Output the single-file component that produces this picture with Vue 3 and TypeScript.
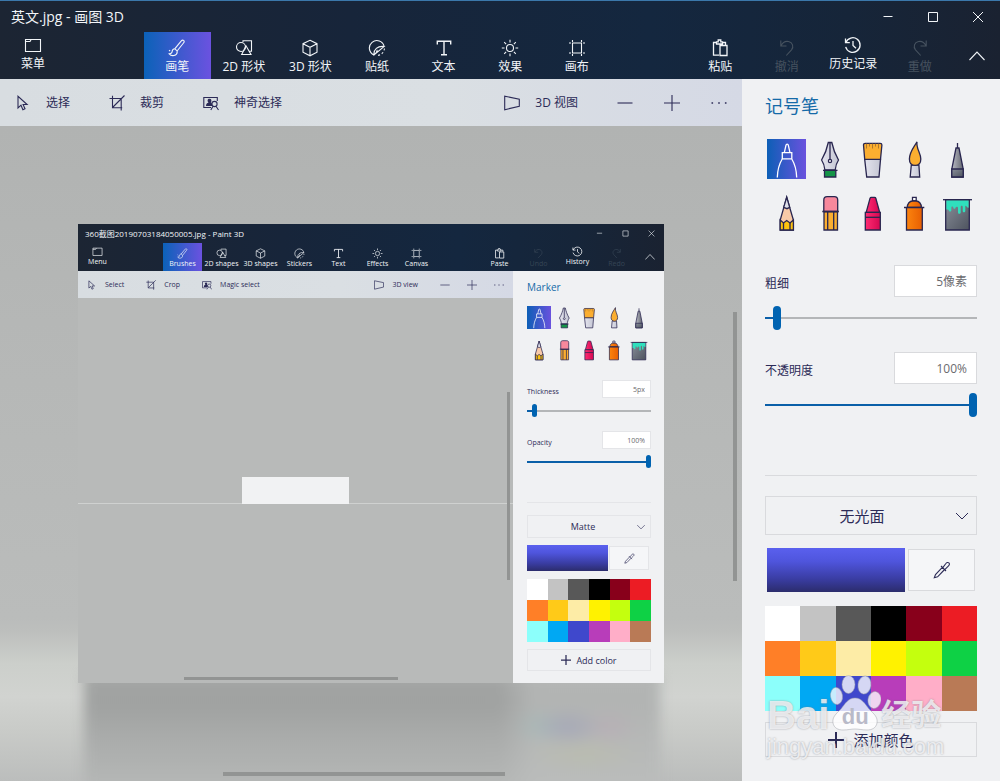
<script setup lang="ts">
import { computed, ref } from 'vue'

defineOptions({ name: 'App' })

const props = defineProps<{ compact?: boolean }>()

interface Command {
  icon: string
  label: string
  raised?: boolean
  disabled?: boolean
}

const zh = {
  title: '英文.jpg - 画图 3D',
  menu: '菜单',
  tabs: ['画笔', '2D 形状', '3D 形状', '贴纸', '文本', '效果', '画布'],
  actions: ['粘贴', '撤消', '历史记录', '重做'],
  tools: ['选择', '裁剪', '神奇选择'],
  view: '3D 视图',
  heading: '记号笔',
  thickness: '粗细',
  thicknessValue: '5像素',
  opacity: '不透明度',
  finish: '无光面',
  add: '添加颜色',
}

const en: typeof zh = {
  title: '360截图20190703184050005.jpg - Paint 3D',
  menu: 'Menu',
  tabs: ['Brushes', '2D shapes', '3D shapes', 'Stickers', 'Text', 'Effects', 'Canvas'],
  actions: ['Paste', 'Undo', 'History', 'Redo'],
  tools: ['Select', 'Crop', 'Magic select'],
  view: '3D view',
  heading: 'Marker',
  thickness: 'Thickness',
  thicknessValue: '5px',
  opacity: 'Opacity',
  finish: 'Matte',
  add: 'Add color',
}

const t = props.compact ? en : zh
const uid = props.compact ? 'nested' : 'main'

const tabIcons = ['brush', 'shapes', 'cube', 'sticker', 'text', 'effects', 'canvas']
const tabs: Command[] = t.tabs.map((label, i) => ({ label, icon: tabIcons[i] }))
const actions: Command[] = [
  { icon: 'paste', label: t.actions[0] },
  { icon: 'undo', label: t.actions[1], disabled: true },
  { icon: 'history', label: t.actions[2], raised: true },
  { icon: 'redo', label: t.actions[3], disabled: true },
]
const toolIcons = ['cursor', 'crop', 'magic']
const tools: Command[] = t.tools.map((label, i) => ({ label, icon: toolIcons[i] }))

const pens = ['marker', 'fountain', 'flat', 'round', 'pixel', 'pencil', 'eraser', 'crayon', 'spray', 'bucket']
const activeTab = ref(0)
const activePen = ref('marker')

const colors = [
  '#ffffff', '#c3c3c3', '#585858', '#000000', '#88001b', '#ec1c24',
  '#ff7f27', '#ffca18', '#fdeca6', '#fff200', '#c4ff0e', '#0ed145',
  '#8cfffb', '#00a8f3', '#3f48cc', '#b83dba', '#ffaec8', '#b97a56',
]

const thickness = ref(5)
const opacity = ref(100)
const thicknessFill = computed(() => `${thickness.value}%`)
const opacityFill = computed(() => `${opacity.value}%`)
</script>

<template>
  <div class="window" :class="compact ? 'compact' : 'full'">
    <svg v-if="!compact" class="sprite" aria-hidden="true">
      <defs>
        <linearGradient id="g-steel" x1="0" x2="1"><stop offset="0" stop-color="#b9bbc4" /><stop offset="1" stop-color="#62656f" /></linearGradient>
        <linearGradient id="g-silver" x1="0" x2="1"><stop offset="0" stop-color="#e4e4ee" /><stop offset="1" stop-color="#c4c6d3" /></linearGradient>
        <linearGradient id="g-pink" x1="0" x2="1"><stop offset="0" stop-color="#ff2c72" /><stop offset="1" stop-color="#d40751" /></linearGradient>
        <linearGradient id="g-orange" x1="0" x2="1"><stop offset="0" stop-color="#ff8a10" /><stop offset="1" stop-color="#e55a00" /></linearGradient>
        <linearGradient id="g-slate" x1="0" x2="1" y2="1"><stop offset="0" stop-color="#8a8f9a" /><stop offset="1" stop-color="#4d535e" /></linearGradient>
      </defs>
      <symbol id="i-menu" viewBox="0 0 18 18"><path d="M1.500 3.500h15v12h-15zM1.500 5.500h4.500l1.200-2" /></symbol>
      <symbol id="i-brush" viewBox="0 0 18 18"><path d="M15.600 1.400c-1-.6-1.800 0-2.500.8L6.800 9.800l2.300 2.200 6.400-8c.7-.9 1-1.900.1-2.600zM6.800 9.800c-2 .2-2.600 1.400-2.700 3-.1 1.300-1.200 2-2.900 2.100 1.200 1.500 3 2 4.900 1.600 2.300-.6 3.400-2.300 3-4.500M1 11.200l1.200.8" /></symbol>
      <symbol id="i-shapes" viewBox="0 0 18 18"><path d="M8 3V1.800h8.500v10.500h-2.200M11 6.800l-4.300 8.700h9.300z" /><circle cx="6" cy="8" r="4.500" /></symbol>
      <symbol id="i-cube" viewBox="0 0 18 18"><path d="M9 1.300l7 3.400v8.500L9 16.800l-7-3.600V4.700zM2 4.700L9 8.300l7-3.600M9 8.300v8.500" /></symbol>
      <symbol id="i-sticker" viewBox="0 0 18 18"><path d="M6 16A7.500 7.500 0 1 1 16.200 7.500M6 16c-.6-5.500 3.500-9.300 10.200-8.500L6 16zM9 10.800c.5 1.500-.3 3-3 5.200" /><path d="M16.400 9.500a7.500 7.500 0 0 1-7.600 7" stroke-dasharray="2 2" /></symbol>
      <symbol id="i-text" viewBox="0 0 18 18"><path d="M2.300 5.500V2.300h13.400v3.200M9 2.300v13.400M6 15.700h6" stroke-width="1.400" /></symbol>
      <symbol id="i-effects" viewBox="0 0 18 18"><circle cx="9" cy="9" r="3.500" /><path d="M9 .8v2.700M9 14.500v2.700M.8 9h2.700M14.500 9h2.700M3.200 3.200l1.900 1.900M12.900 12.900l1.900 1.900M3.200 14.800l1.900-1.900M12.900 5.100l1.900-1.900" /></symbol>
      <symbol id="i-canvas" viewBox="0 0 18 18"><path d="M4.500 1v16M13.500 1v16M1 4h16M1 14h16" stroke-dasharray="2 1 10 1 2" /></symbol>
      <symbol id="i-paste" viewBox="0 0 18 18"><path d="M8 16.200H2.500V3.500H5M12 3.500h2.500V6M5.500 2.800h1.700V1h2.600v1.800h1.700V5h-6zM9 6.500h7v10H9z" stroke-width="1.300" /></symbol>
      <symbol id="i-undo" viewBox="0 0 18 18"><path d="M2.800 1.500V7h5.700M3 6.800c1.500-3 4.300-5 7.500-4.300 4.200 1 5.500 5.200 3 8.300l-5.200 5.700" /></symbol>
      <symbol id="i-redo" viewBox="0 0 18 18"><path d="M15.200 1.500V7H9.500M15 6.800c-1.500-3-4.300-5-7.500-4.300-4.200 1-5.500 5.200-3 8.300l5.200 5.700" /></symbol>
      <symbol id="i-history" viewBox="0 0 18 18"><path d="M1.500 2.500v4.200h4.300M1.900 6.600A7.300 7.300 0 1 1 1.700 10.800M9 5v4.500l3 2.700" stroke-width="1.300" /></symbol>
      <symbol id="i-cursor" viewBox="0 0 16 16"><path d="M3 1.300v11.600l3-2.700 1.900 4.500 2.100-.9-1.900-4.300h4z" /></symbol>
      <symbol id="i-crop" viewBox="0 0 16 16"><path d="M3.500.8v11.900h9.700M.5 3.500h11.700v12M3.500 12.500L15.500.5" /></symbol>
      <symbol id="i-magic" viewBox="0 0 16 16"><path d="M8 12.500H.8v-10h13.500V6" /><path d="M3 11c0-2 .8-3 2.500-3.300C4 6 4.500 3.800 6.500 3.800s2.500 2.200 1.300 3.900c1 .3 1.500.8 1.400 3.300z" fill="currentColor" stroke="none" /><circle cx="11.500" cy="9" r="2.600" /><path d="M10 11.300L7.800 15M13 11.300l2.500 3.700" /></symbol>
      <symbol id="i-view" viewBox="0 0 16 16"><path d="M.7 1.200v13.500l14.600-3.400V4.200z" /></symbol>
      <symbol id="i-minus" viewBox="0 0 16 16"><path d="M.5 8h15" /></symbol>
      <symbol id="i-plus" viewBox="0 0 16 16"><path d="M0 8h16M8 0v16" /></symbol>
      <symbol id="i-dots" viewBox="0 0 16 16"><path d="M.5 8h1.600M7.200 8h1.600M13.900 8h1.600" stroke-width="1.600" /></symbol>
      <symbol id="i-up" viewBox="0 0 16 16"><path d="M.5 12L8 4l7.500 8" /></symbol>
      <symbol id="i-down" viewBox="0 0 16 16"><path d="M2 5l6 6 6-6" stroke-width="1" /></symbol>
      <symbol id="i-min" viewBox="0 0 12 12"><path d="M1.500 5.500h9" stroke-width="1" /></symbol>
      <symbol id="i-max" viewBox="0 0 12 12"><path d="M1.500 1.500h9v9h-9z" stroke-width="1" /></symbol>
      <symbol id="i-close" viewBox="0 0 12 12"><path d="M1 1l10 10M11 1L1 11" stroke-width="1" /></symbol>
      <symbol id="i-dropper" viewBox="0 0 18 18"><path d="M9.300 6.300L2.500 13.500 1.300 16.700l3.300-.9 7-7.300M8 5l5 5M10 6.300l2.700-3.500c1-1.500 2.300-1.700 3.200-.9.900.9.600 2.200-.6 3.200L12 8.300" /></symbol>

      <symbol id="p-marker" viewBox="0 0 39 40"><path d="M17.300 13.700l1.700-7.500c.3-1.400 2-1.400 2.300 0L23 13.700M15.300 13.700h9.500v6.100h-9.500zM15.200 20c-3 5-4.700 11-4.900 18.500M24.800 20c3 5 4.700 11 4.900 18.500" fill="none" stroke="#fff" stroke-width="1.300" /></symbol>
      <symbol id="p-fountain" viewBox="0 0 39 40"><path d="M14.500 31.300h11.300V38H14.500z" fill="#149447" /><path d="M18.300 3.500h3.500c1 5 3 11 6.700 17.500-2 3-3 6.500-3.300 10H14.900c-.3-3.500-1.300-7-3.300-10 3.700-6.500 5.700-12.500 6.700-17.500z" fill="url(#g-silver)" /><path d="M13 31.300h14.500M20 4v16" /><circle cx="20" cy="22" r="1.600" fill="#fff" /></symbol>
      <symbol id="p-flat" viewBox="0 0 39 40"><path d="M11.700 20.300h15.800L26 38H13.700z" fill="url(#g-silver)" /><path d="M10.500 6c0-1 .7-1.700 1.700-1.700h15c1 0 1.700.7 1.700 1.700l-1.400 14.300H11.700z" fill="#fbae30" /><path d="M13.500 4.500v5M16.500 4.500v3M19.500 4.500v5M22.500 4.500v3M25.500 4.500v5" stroke="#9b6a2c" stroke-width=".8" /></symbol>
      <symbol id="p-round" viewBox="0 0 39 40"><path d="M16.300 26h7.600l.8 12h-9.500z" fill="url(#g-silver)" /><path d="M22 2.800c-3 5.500-7.500 10-7.600 17.200 0 4 2.300 6.400 5.700 6.400s5.700-2.400 5.700-6.400C25.700 14 21 9.500 22 2.800z" fill="#fbae30" /></symbol>
      <symbol id="p-pixel" viewBox="0 0 39 40"><path d="M19.500 4v5M18 9h3l4.200 21v8H13.800v-8z" fill="url(#g-steel)" /><path d="M13.800 30h11.400v8H13.800z" fill="url(#g-slate)" /></symbol>
      <symbol id="p-pencil" viewBox="0 0 39 40"><path d="M19.700 5.300l6.700 22.700v10H13.200V28z" fill="#f9caa8" /><path d="M19.700 5.300l3 10-2.700 1.400-3.300-1.400z" fill="#dfe0ea" /><path d="M13.200 28l3.300 3 3.200-2.500 3.300 2.500 3.400-3v10H13.200z" fill="#fdc20f" /><path d="M16.500 31v7M23 31v7" /></symbol>
      <symbol id="p-eraser" viewBox="0 0 39 40"><path d="M14 19.500h13.500V38H14z" fill="#fbae30" /><path d="M13.800 19.500V8c0-2 1.300-3.300 3.300-3.300h7.300c2 0 3.300 1.300 3.300 3.300v11.500z" fill="#f7889c" /><path d="M12.300 19.500h16.500M17.700 19.500V38M23.700 19.500V38" /></symbol>
      <symbol id="p-crayon" viewBox="0 0 39 40"><path d="M13.200 20.300L17 6.300c.2-.7.500-1 1.200-1h3.400c.7 0 1 .3 1.200 1l3.900 14z" fill="url(#g-pink)" /><path d="M12.300 20.300h15V38h-15z" fill="url(#g-pink)" /><path d="M12.300 25.300h15" /></symbol>
      <symbol id="p-spray" viewBox="0 0 39 40"><path d="M17.500 5.300h3.700V9h-3.700z" fill="#fff" /><path d="M12.300 15.500c0-4 2.500-6.500 5.200-6.500h3.700c2.700 0 5.200 2.500 5.200 6.500z" fill="url(#g-orange)" /><path d="M11.500 15.500h15.800V38H11.500zM9 15.500h20.300" fill="url(#g-orange)" /></symbol>
      <symbol id="p-bucket" viewBox="0 0 39 40"><path d="M7.700 7.700h23.600V38H7.700z" fill="url(#g-slate)" /><path d="M8.400 8.300h22.200v7.500c-2 0-1.800-2-3.300-2v5c0 2-2.600 2-2.600 0v-4c0-1.500-2-1.500-2 0v5.500c0 2-2.700 2-2.700 0V16c0-1.500-2-1.500-2.400-.5-.3 2-2.300 1.500-2.300 0 0-1.500-2-1.500-2 0v2.800c0 2-2.300 1.500-2.600 0-.3-1.300-1-.8-2.300-.8z" fill="#2fe0bd" stroke="none" /><path d="M5 7.700h29" /></symbol>
    </svg>

    <header class="header">
      <div class="titlebar">
        <span class="title">{{ t.title }}</span>
        <div class="winbtns">
          <button v-for="b in ['min', 'max', 'close']" :key="b" class="winbtn" type="button" :aria-label="b">
            <svg><use :href="`#i-${b}`" /></svg>
          </button>
        </div>
      </div>
      <nav class="ribbon">
        <button class="cmd raised menu" type="button">
          <svg><use href="#i-menu" /></svg><span>{{ t.menu }}</span>
        </button>
        <div class="tabs">
          <button
            v-for="(c, i) in tabs" :key="c.icon" type="button"
            class="cmd" :class="{ active: i === activeTab }" @click="activeTab = i"
          >
            <svg><use :href="`#i-${c.icon}`" /></svg><span>{{ c.label }}</span>
          </button>
        </div>
        <div class="actions">
          <button
            v-for="c in actions" :key="c.icon" type="button"
            class="cmd" :class="{ raised: c.raised }" :disabled="c.disabled"
          >
            <svg><use :href="`#i-${c.icon}`" /></svg><span>{{ c.label }}</span>
          </button>
        </div>
        <button class="collapse" type="button" aria-label="collapse"><svg><use href="#i-up" /></svg></button>
      </nav>
    </header>

    <div class="body">
      <main class="work">
        <div class="toolbar">
          <button v-for="c in tools" :key="c.icon" class="tool" type="button">
            <svg><use :href="`#i-${c.icon}`" /></svg><span>{{ c.label }}</span>
          </button>
          <button class="tool view" type="button"><svg><use href="#i-view" /></svg><span>{{ t.view }}</span></button>
          <div class="zoom">
            <button v-for="b in ['minus', 'plus', 'dots']" :key="b" class="tool" type="button" :aria-label="b">
              <svg><use :href="`#i-${b}`" /></svg>
            </button>
          </div>
        </div>
        <div class="stage">
          <div v-if="!compact" class="frame"><App compact /></div>
          <template v-else>
            <div class="seam"></div>
            <div class="patch"></div>
          </template>
          <div class="scroll-y"></div>
          <div class="scroll-x"></div>
        </div>
      </main>

      <aside class="side">
        <h2>{{ t.heading }}</h2>
        <div class="pens">
          <button
            v-for="p in pens" :key="p" type="button" class="pen"
            :class="{ chosen: p === activePen }" :aria-label="p" @click="activePen = p"
          >
            <svg><use :href="`#p-${p}`" /></svg>
          </button>
        </div>

        <div class="field">
          <label :for="`${uid}-thick`">{{ t.thickness }}</label>
          <input :id="`${uid}-thick`" class="value" type="text" :value="t.thicknessValue">
        </div>
        <input v-model.number="thickness" class="range" type="range" min="1" max="100" :aria-label="t.thickness" :style="{ '--fill': thicknessFill }">
        <div class="field second">
          <label :for="`${uid}-opacity`">{{ t.opacity }}</label>
          <input :id="`${uid}-opacity`" class="value" type="text" value="100%">
        </div>
        <input v-model.number="opacity" class="range" type="range" min="0" max="100" :aria-label="t.opacity" :style="{ '--fill': opacityFill }">

        <hr>

        <div class="finish">
          <select :aria-label="t.finish"><option>{{ t.finish }}</option></select>
          <svg><use href="#i-down" /></svg>
        </div>
        <div class="current">
          <div class="preview"></div>
          <button class="dropper" type="button" aria-label="dropper"><svg><use href="#i-dropper" /></svg></button>
        </div>
        <div class="palette">
          <button v-for="c in colors" :key="c" type="button" :aria-label="c" :style="{ background: c }"></button>
        </div>
        <button class="add" type="button"><svg><use href="#i-plus" /></svg><span>{{ t.add }}</span></button>

        <div v-if="!compact" class="mark">
          <div class="brand">
            <span class="bai">Bai</span>
            <span class="paw">
              <svg viewBox="0 0 52 56">
                <ellipse cx="7.500" cy="21" rx="6" ry="8.500" transform="rotate(-8 7.500 21)" />
                <ellipse cx="19.500" cy="9.500" rx="6.500" ry="9" />
                <ellipse cx="35.500" cy="10" rx="6.500" ry="9" transform="rotate(8 35.500 10)" />
                <ellipse cx="45.500" cy="25" rx="6.500" ry="8.500" transform="rotate(10 45.500 25)" />
                <path d="M26 23c7 0 10 6 14 11 5 5 9 8 8 14-1 5-5 7-10 7-5 0-8-1-12-1s-7 1-12 1c-5 0-9-2-10-7-1-6 3-9 8-14 4-5 7-11 14-11z" />
              </svg>
              <span class="du">du</span>
            </span>
            <span class="jing">经验</span>
          </div>
          <div class="host">jingyan.baidu.com</div>
        </div>
      </aside>
    </div>
  </div>
</template>

<style>
body {
  margin: 0;
}
</style>

<style scoped>
.window {
  --title-h: 31px;
  --title-x: 11px;
  --title-f: 14px;
  --f: 12px;
  --lh: 16px;
  --ribbon-h: 47px;
  --cmd-w: 66px;
  --tabs-gap: 78px;
  --tabs-w: 466px;
  --actions-w: 266px;
  --collapse-w: 47px;
  --winbtn-w: 45px;
  --win-icon: 12px;
  --cmd-icon: 18px;
  --cmd-pad: 7px;
  --cmd-gap: 2px;
  --raised-pad: 4px;
  --bar-h: 47px;
  --bar-pad: 15px;
  --tool-icon: 16px;
  --tool-gap: 15px;
  --tool-space: 39px;
  --zoom-gap: 31px;
  --side-w: 258px;
  --side-l: 23px;
  --side-r: 23px;
  --head-top: 15px;
  --head-f: 18px;
  --head-lh: 24px;
  --pens-top: 21px;
  --pen-w: 39px;
  --pen-h: 40px;
  --pen-row: 13px;
  --pens-l: 2px;
  --field-top: 33px;
  --field-second: 22px;
  --field-h: 32px;
  --value-w: 83px;
  --value-pad: 9px;
  --label-drop: 6px;
  --range-top: 9px;
  --range-h: 24px;
  --thumb-w: 8px;
  --track: 2px;
  --hr-top: 58px;
  --select-top: 20px;
  --select-h: 39px;
  --select-shift: 18px;
  --line: #d9dadd;
  --big-f: 15px;
  --preview-top: 13px;
  --preview-h: 44px;
  --dropper-w: 67px;
  --drop-gap: 3px;
  --palette-top: 14px;
  --cell: 35px;
  --add-top: 11px;
  --add-h: 35px;
  --add-gap: 9px;
  display: flex;
  flex-direction: column;
  box-sizing: border-box;
  font-family: "Open Sans", "Noto Sans CJK SC", sans-serif;
  font-size: var(--f);
  line-height: var(--lh);
  color: #2c2b57;
  background: #b8bab9;
}
.full {
  min-height: 100vh;
}
.compact {
  --title-h: 19px;
  --title-x: 7px;
  --title-f: 8px;
  --f: 7px;
  --lh: 9px;
  --ribbon-h: 28px;
  --cmd-w: 39px;
  --tabs-gap: 46px;
  --tabs-w: 273px;
  --actions-w: 156px;
  --collapse-w: 28px;
  --winbtn-w: 26px;
  --win-icon: 7px;
  --cmd-icon: 11px;
  --cmd-pad: 5px;
  --cmd-gap: 0px;
  --raised-pad: 3px;
  --bar-h: 27px;
  --bar-pad: 9px;
  --tool-icon: 10px;
  --tool-gap: 8px;
  --tool-space: 22px;
  --zoom-gap: 17px;
  --side-w: 151px;
  --side-l: 14px;
  --side-r: 13px;
  --head-top: 9px;
  --head-f: 10px;
  --head-lh: 14px;
  --pens-top: 12px;
  --pen-w: 24px;
  --pen-h: 23px;
  --pen-row: 9px;
  --pens-l: 0px;
  --field-top: 19px;
  --field-second: 14px;
  --field-h: 18px;
  --value-w: 49px;
  --value-pad: 5px;
  --label-drop: 4px;
  --range-top: 6px;
  --range-h: 13px;
  --thumb-w: 5px;
  --hr-top: 34px;
  --select-top: 12px;
  --select-h: 23px;
  --select-shift: 12px;
  --line: #e4e5e8;
  --big-f: 9px;
  --preview-top: 7px;
  --preview-h: 26px;
  --dropper-w: 40px;
  --drop-gap: 1px;
  --palette-top: 8px;
  --cell: 21px;
  --add-top: 7px;
  --add-h: 22px;
  --add-gap: 5px;
}
.sprite {
  position: absolute;
  width: 0;
  height: 0;
}
button,
input,
select {
  box-sizing: border-box;
  margin: 0;
  padding: 0;
  border: 0;
  border-radius: 0;
  background: none;
  color: inherit;
  font: inherit;
}
svg {
  display: block;
  flex: none;
  fill: none;
  stroke: currentColor;
  stroke-width: 1.1;
}

/* header */
.header {
  color: #f2f5f8;
  background: linear-gradient(90deg, #1c2533 0%, #17253a 35%, #14273f 65%, #162539 85%, #1a2231 100%);
}
.full > .header {
  border-top: 1px solid #3b78ab;
}
.titlebar {
  display: flex;
  align-items: center;
  justify-content: space-between;
  height: var(--title-h);
  padding-left: var(--title-x);
  font-size: var(--title-f);
}
.winbtns {
  display: flex;
}
.winbtn {
  display: grid;
  place-items: center;
  width: var(--winbtn-w);
  height: var(--title-h);
}
.winbtn svg {
  width: var(--win-icon);
  height: var(--win-icon);
}
.ribbon {
  display: flex;
  height: var(--ribbon-h);
}
.menu {
  width: var(--cmd-w);
}
.tabs {
  display: grid;
  grid-template-columns: repeat(7, 1fr);
  width: var(--tabs-w);
  margin-left: var(--tabs-gap);
}
.actions {
  display: grid;
  grid-template-columns: repeat(4, 1fr);
  width: var(--actions-w);
  margin-left: auto;
}
.cmd {
  display: flex;
  flex-direction: column;
  align-items: center;
  gap: var(--cmd-gap);
  padding-top: var(--cmd-pad);
  white-space: nowrap;
}
.cmd.raised {
  padding-top: var(--raised-pad);
}
.cmd svg {
  width: var(--cmd-icon);
  height: var(--cmd-icon);
}
.cmd.active {
  background: linear-gradient(90deg, #0b62b8, #6b52e0);
}
.cmd:disabled {
  color: #46525f;
}
.compact .cmd:disabled {
  color: #364555;
}
.collapse {
  display: grid;
  place-items: center;
  width: var(--collapse-w);
}
.collapse svg {
  width: var(--tool-icon);
  height: var(--tool-icon);
}

/* work area */
.body {
  display: flex;
  flex: 1;
}
.work {
  display: flex;
  flex: 1;
  flex-direction: column;
  min-width: 0;
}
.toolbar {
  display: flex;
  align-items: center;
  gap: var(--tool-space);
  height: var(--bar-h);
  padding: 0 var(--bar-pad);
  background: linear-gradient(90deg, #d8dde1, #dadfe3 60%, #d5d9e5);
}
.tool {
  display: flex;
  align-items: center;
  gap: var(--tool-gap);
  white-space: nowrap;
}
.tool svg {
  width: var(--tool-icon);
  height: var(--tool-icon);
}
.view {
  margin-left: auto;
}
.zoom {
  display: flex;
  gap: var(--zoom-gap);
}
.stage {
  position: relative;
  flex: 1;
  overflow: hidden;
}
.full > .body > .work > .stage {
  padding: 98px 78px 99px;
  background: linear-gradient(#b1b3b2 0, #b5b7b6 30%, #babcbb 75%, #bdbfbd 77%, #cccfcb 82%, #d1d3d0 87%, #c9cbc8 92%, #bbbdbc 100%);
}
.frame {
  position: relative;
}
.frame::before {
  content: "";
  position: absolute;
  top: 98%;
  left: 6px;
  right: 4px;
  height: 130px;
  background:
    radial-gradient(ellipse 34px 20px at 485px 53px, rgba(145, 148, 185, 0.4), transparent),
    radial-gradient(ellipse 30px 20px at 525px 53px, rgba(190, 155, 180, 0.25), transparent),
    radial-gradient(ellipse 28px 20px at 455px 52px, rgba(145, 185, 185, 0.3), transparent),
    radial-gradient(ellipse 60px 20px at 500px 80px, rgba(190, 193, 160, 0.35), transparent),
    linear-gradient(90deg, transparent 72%, rgba(190, 192, 191, 0.6) 78%),
    linear-gradient(#a2a4a3 0, #a0a2a1 24%, #aaacab 50%, #b5b7b6 85%);
  filter: blur(6px);
}
.frame > .window {
  position: relative;
}
.seam,
.patch,
.scroll-x,
.scroll-y {
  position: absolute;
}
.seam {
  top: 205px;
  left: 0;
  right: 0;
  height: 1px;
  background: #cfd1d0;
}
.patch {
  top: 179px;
  left: 164px;
  width: 107px;
  height: 27px;
  background: #f1f2f3;
}
.scroll-x,
.scroll-y {
  background: #929493;
}
.scroll-y {
  top: 186px;
  right: 5px;
  width: 4px;
  height: 269px;
}
.scroll-x {
  left: 30%;
  right: 32%;
  bottom: 6px;
  height: 4px;
}
.compact .scroll-y {
  top: 94px;
  right: 3px;
  width: 3px;
  height: 188px;
}
.compact .scroll-x {
  left: 106px;
  right: 115px;
  bottom: 3px;
  height: 3px;
}

/* side panel */
.side {
  position: relative;
  flex: none;
  box-sizing: border-box;
  width: var(--side-w);
  padding: var(--head-top) var(--side-r) 12px var(--side-l);
  background: #f0f1f3;
}
h2 {
  margin: 0;
  font-size: var(--head-f);
  font-weight: 400;
  line-height: var(--head-lh);
  color: #156aa8;
}
.pens {
  display: grid;
  grid-template-columns: repeat(5, var(--pen-w));
  justify-content: space-between;
  row-gap: var(--pen-row);
  margin: var(--pens-top) 0 0 var(--pens-l);
}
.pen svg {
  width: var(--pen-w);
  height: var(--pen-h);
  stroke: #29264f;
  stroke-width: 1.3;
}
.chosen {
  background: linear-gradient(90deg, #0d5fb6, #6a52de);
}
.field {
  display: flex;
  align-items: center;
  justify-content: space-between;
  height: var(--field-h);
  margin-top: var(--field-top);
}
.field.second {
  margin-top: var(--field-second);
}
.field label {
  padding-top: var(--label-drop);
}
.value {
  width: var(--value-w);
  height: var(--field-h);
  padding-right: var(--value-pad);
  border: 1px solid var(--line);
  background: #fff;
  color: #6a6a6e;
  text-align: right;
}
.range {
  display: block;
  width: 100%;
  height: var(--range-h);
  margin-top: var(--range-top);
  appearance: none;
}
.range::-webkit-slider-runnable-track {
  height: var(--range-h);
  background: linear-gradient(90deg, #0a5fa8 var(--fill), #b4b6b8 var(--fill)) center / 100% var(--track) no-repeat;
}
.range::-webkit-slider-thumb {
  width: var(--thumb-w);
  height: var(--range-h);
  border-radius: 4px;
  background: #0063b1;
  appearance: none;
}
hr {
  height: 1px;
  margin: var(--hr-top) 0 0;
  border: 0;
  background: var(--line);
}
.finish {
  display: grid;
  align-items: center;
  margin-top: var(--select-top);
}
.finish > * {
  grid-area: 1 / 1;
}
.finish select {
  width: 100%;
  height: var(--select-h);
  padding-right: var(--select-shift);
  border: 1px solid var(--line);
  font-size: var(--big-f);
  text-align: center;
  text-align-last: center;
  appearance: none;
}
.finish svg {
  justify-self: end;
  width: var(--tool-icon);
  height: var(--tool-icon);
  margin-right: var(--cmd-pad);
  pointer-events: none;
}
.current {
  display: flex;
  align-items: center;
  gap: var(--drop-gap);
  margin: var(--preview-top) 2px 0 var(--pens-l);
}
.preview {
  flex: 1;
  height: var(--preview-h);
  background: linear-gradient(#5a60ee, #4f55dd 30%, #3a3da3 70%, #2b2c6c);
}
.dropper {
  display: grid;
  place-items: center;
  width: var(--dropper-w);
  height: calc(var(--preview-h) - 2px);
  border: 1px solid var(--line);
  background: #f5f6f8;
}
.dropper svg {
  width: var(--cmd-icon);
  height: var(--cmd-icon);
}
.palette {
  display: grid;
  grid-template-columns: repeat(6, 1fr);
  grid-auto-rows: var(--cell);
  margin: var(--palette-top) 0 0;
}
.add {
  display: flex;
  align-items: center;
  justify-content: center;
  gap: var(--add-gap);
  width: 100%;
  height: var(--add-h);
  margin-top: var(--add-top);
  border: 1px solid var(--line);
  font-size: var(--big-f);
}
.add svg {
  width: var(--tool-icon);
  height: var(--tool-icon);
  stroke-width: 2;
}

/* watermark */
.mark {
  position: absolute;
  top: 596px;
  left: 25px;
  font-family: "Liberation Sans", "Noto Sans CJK SC", sans-serif;
  color: rgba(250, 250, 252, 0.8);
  text-shadow: 0 0 2px rgba(120, 122, 130, 0.7);
  pointer-events: none;
}
.brand {
  display: flex;
  align-items: flex-end;
  height: 56px;
  font-weight: 700;
}
.bai {
  font-size: 40px;
  line-height: 40px;
  height: 36px;
}
.paw {
  display: grid;
  width: 52px;
}
.paw > * {
  grid-area: 1 / 1;
}
.paw svg {
  fill: rgba(255, 255, 255, 0.78);
  stroke: rgba(160, 162, 170, 0.5);
  stroke-width: 1;
}
.du {
  align-self: end;
  justify-self: center;
  font-size: 22px;
  line-height: 28px;
  color: #b9bac8;
  text-shadow: none;
}
.jing {
  font-size: 30px;
  line-height: 32px;
}
.host {
  margin-top: 3px;
  font-size: 22px;
  line-height: 26px;
}
</style>
